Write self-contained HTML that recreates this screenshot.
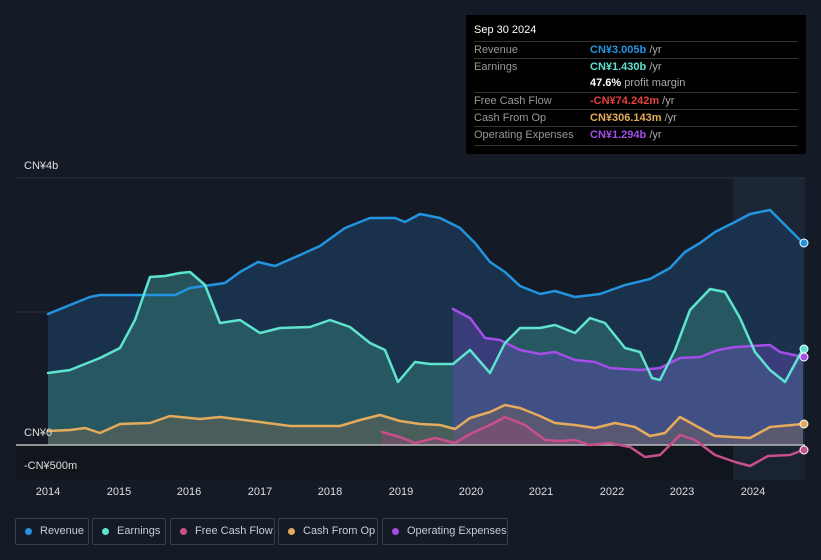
<!DOCTYPE html>
<html><head><style>
body{margin:0;background:#151b26;width:821px;height:560px;overflow:hidden;font-family:"Liberation Sans",sans-serif;position:relative}
.tt{position:absolute;left:466px;top:15px;width:340px;height:139px;background:#000;color:#fff;font-size:11px}
.tt .h{position:absolute;left:8px;top:9px;font-size:11px}
.row{position:absolute;left:8px;width:324px;border-top:1px solid #333;height:17px;line-height:17px}
.row span.l{color:#999;position:absolute;left:0}
.row span.v{position:absolute;left:116px;font-weight:bold}
.row span.v i{font-style:normal;font-weight:normal;color:#aaa}
.lab{position:absolute;color:#ddd;font-size:11px}
.lg{position:absolute;top:518px;height:27px;border:1px solid #3a404b;border-radius:2px;color:#c8ccd2;font-size:11px;line-height:25px;box-sizing:border-box;padding-left:24px;white-space:nowrap}
.lg b{position:absolute;left:9px;top:9px;width:7px;height:7px;border-radius:50%}
</style></head><body>
<svg width="821" height="560" style="position:absolute;left:0;top:0">
<rect x="16" y="445" width="789" height="35" fill="#11151c"/>
<rect x="733" y="178" width="72" height="302" fill="#1c2a3c" opacity="0.7"/>
<line x1="16" y1="178" x2="805" y2="178" stroke="#2a3240"/>
<line x1="16" y1="312" x2="805" y2="312" stroke="#2a3240"/>
<polygon fill="#1b3450" opacity="0.9" points="48,445 48,314 100,295 120,295 175,295 190,288 225,283 240,272 258,262 275,266 300,255 320,246 345,228 370,218 395,218 405,222 420,214 440,218 460,228 475,243 490,262 505,272 520,286 540,294 555,291 575,297 600,294 625,285 650,279 670,268 685,252 700,243 715,232 735,222 750,214 770,210 785,225 803,243 803,445"/>
<polygon fill="#2a6266" opacity="0.8" points="48,445 48,373 70,370 100,358 120,348 135,320 150,277 165,276 180,273 190,272 205,285 220,323 240,320 260,333 280,328 310,327 330,320 350,327 370,343 385,350 398,382 415,362 430,364 453,364 470,350 490,373 505,343 520,328 540,328 555,325 575,333 590,318 605,323 625,348 640,352 652,378 660,380 675,350 690,310 710,289 725,292 740,318 755,352 770,370 785,382 803,349 803,445"/>
<polygon fill="#5a47a8" opacity="0.5" points="453,445 453,309 470,318 485,338 500,340 520,350 540,354 555,352 575,360 595,362 610,368 640,370 660,368 680,358 700,357 718,350 735,347 770,345 780,352 803,357 803,445"/>
<polygon fill="#8a6a50" opacity="0.35" points="48,445 48,431 70,430 85,428 100,433 120,424 150,423 170,416 200,419 220,417 260,422 290,426 340,426 360,420 380,415 400,421 420,424 440,425 455,429 470,418 490,412 505,405 520,408 540,416 555,423 575,425 595,428 615,423 635,427 650,436 665,433 680,417 700,428 715,436 750,438 770,427 803,424 803,445"/>
<polygon fill="#a04878" opacity="0.35" points="382,445 382,432 400,437 415,443 435,438 455,443 470,434 490,425 505,417 525,425 545,440 560,441 575,440 590,445"/>
<line x1="16" y1="445" x2="805" y2="445" stroke="#bbb" stroke-width="1.5"/>
<g fill="none" stroke-width="2.5" stroke-linejoin="round" stroke-linecap="round">
<polyline stroke="#2394df" points="48,314 70,305 90,297 100,295 120,295 175,295 190,288 225,283 240,272 258,262 275,266 300,255 320,246 345,228 370,218 395,218 405,222 420,214 440,218 460,228 475,243 490,262 505,272 520,286 540,294 555,291 575,297 600,294 625,285 650,279 670,268 685,252 700,243 715,232 735,222 750,214 770,210 785,225 803,243"/>
<polyline stroke="#e4ab5c" points="48,431 70,430 85,428 100,433 120,424 150,423 170,416 200,419 220,417 260,422 290,426 340,426 360,420 380,415 400,421 420,424 440,425 455,429 470,418 490,412 505,405 520,408 540,416 555,423 575,425 595,428 615,423 635,427 650,436 665,433 680,417 700,428 715,436 750,438 770,427 803,424"/>
<polyline stroke="#c84f8c" points="382,432 400,437 415,443 435,438 455,443 470,434 490,425 505,417 525,425 545,440 560,441 575,440 590,445 610,443 630,447 645,457 660,455 680,435 695,440 715,455 735,462 750,466 768,456 790,455 803,450"/>
<polyline stroke="#a34ee8" points="453,309 470,318 485,338 500,340 520,350 540,354 555,352 575,360 595,362 610,368 640,370 660,368 680,358 700,357 718,350 735,347 770,345 780,352 803,357"/>
<polyline stroke="#5ee3cf" points="48,373 70,370 100,358 120,348 135,320 150,277 165,276 180,273 190,272 205,285 220,323 240,320 260,333 280,328 310,327 330,320 350,327 370,343 385,350 398,382 415,362 430,364 453,364 470,350 490,373 505,343 520,328 540,328 555,325 575,333 590,318 605,323 625,348 640,352 652,378 660,380 675,350 690,310 710,289 725,292 740,318 755,352 770,370 785,382 803,349"/>
</g>
<g stroke="#fff" stroke-width="1">
<circle cx="804" cy="243" r="4" fill="#2394df"/>
<circle cx="804" cy="349" r="4" fill="#5ee3cf"/>
<circle cx="804" cy="357" r="4" fill="#a34ee8"/>
<circle cx="804" cy="424" r="4" fill="#e4ab5c"/>
<circle cx="804" cy="450" r="4" fill="#c84f8c"/>
</g>
<g fill="#ddd" font-size="11" font-family="Liberation Sans" text-anchor="middle">
<text x="48" y="495">2014</text><text x="119" y="495">2015</text><text x="189" y="495">2016</text><text x="260" y="495">2017</text><text x="330" y="495">2018</text><text x="401" y="495">2019</text><text x="471" y="495">2020</text><text x="541" y="495">2021</text><text x="612" y="495">2022</text><text x="682" y="495">2023</text><text x="753" y="495">2024</text>
</g>
</svg>
<div class="lab" style="left:24px;top:160px">CN¥4b</div>
<div class="lab" style="left:24px;top:427px">CN¥0</div>
<div class="lab" style="left:24px;top:460px">-CN¥500m</div>
<div class="tt">
<div class="h">Sep 30 2024</div>
<div class="row" style="top:26px"><span class="l">Revenue</span><span class="v" style="color:#2394df">CN¥3.005b <i>/yr</i></span></div>
<div class="row" style="top:43px"><span class="l">Earnings</span><span class="v" style="color:#5ee3cf">CN¥1.430b <i>/yr</i></span></div>
<div class="row" style="top:60px;border-top:none"><span class="v" style="color:#fff">47.6% <i>profit margin</i></span></div>
<div class="row" style="top:77px"><span class="l">Free Cash Flow</span><span class="v" style="color:#e5403f">-CN¥74.242m <i>/yr</i></span></div>
<div class="row" style="top:94px"><span class="l">Cash From Op</span><span class="v" style="color:#e4ab5c">CN¥306.143m <i>/yr</i></span></div>
<div class="row" style="top:111px"><span class="l">Operating Expenses</span><span class="v" style="color:#a34ee8">CN¥1.294b <i>/yr</i></span></div>
<div class="row" style="top:130px;height:0"></div>
</div>
<div class="lg" style="left:15px;width:74px"><b style="background:#2394df"></b>Revenue</div>
<div class="lg" style="left:92px;width:74px"><b style="background:#5ee3cf"></b>Earnings</div>
<div class="lg" style="left:170px;width:105px"><b style="background:#c84f8c"></b>Free Cash Flow</div>
<div class="lg" style="left:278px;width:100px"><b style="background:#e4ab5c"></b>Cash From Op</div>
<div class="lg" style="left:382px;width:126px"><b style="background:#a34ee8"></b>Operating Expenses</div>
</body></html>
